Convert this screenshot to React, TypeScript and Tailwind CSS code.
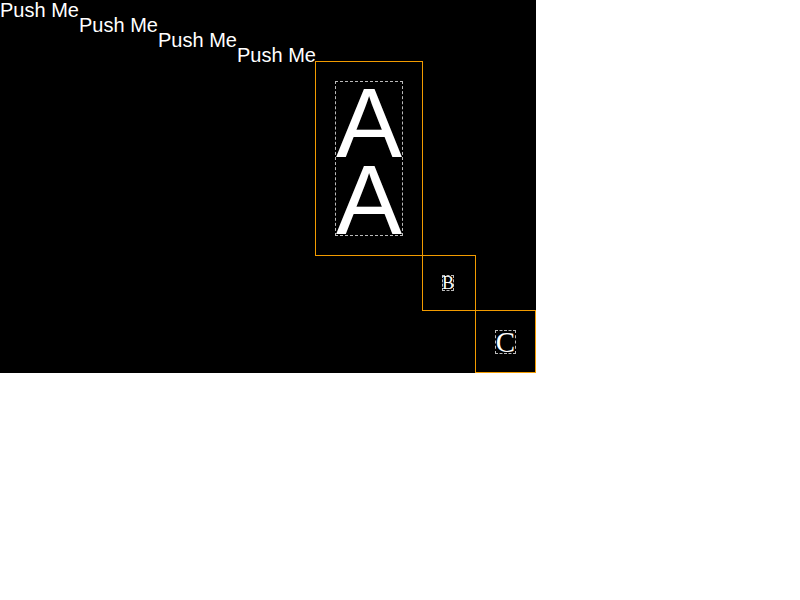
import React from "react";

const pushes = ["ml-0", "ml-[79px]", "ml-[158px]", "ml-[237px]"];

const App = () => {
  return (
    <div className="w-fit bg-black text-white flex flex-col items-start">
      {pushes.map((ml, i) => (
        <div
          key={i}
          className={`${ml} h-[15px] whitespace-nowrap text-[20px] leading-none`}
          style={{ fontFamily: '"Liberation Sans", Arial, sans-serif' }}
        >
          Push Me
        </div>
      ))}

      {/* A box */}
      <div className="ml-[315px] mt-px w-[108px] h-[195px] border border-solid border-[#f29b00] p-[19px]">
        <div className="w-[68px] h-[155px] border border-dashed border-[#bbbbbb]">
          <div
            className="pt-[2px] text-[99px] leading-[77px] text-center"
            style={{ fontFamily: '"Liberation Sans", Arial, sans-serif' }}
          >
            A A
          </div>
        </div>
      </div>

      {/* B box */}
      <div className="ml-[422px] -mt-px w-[54px] h-[56px] border border-solid border-[#f29b00] pt-[19px] pl-[19px]">
        <div
          className="w-[12px] h-[16px] border border-dashed border-[#bbbbbb] flex items-center justify-center overflow-visible text-[18px] leading-none"
          style={{ fontFamily: '"Liberation Serif", serif' }}
        >
          B
        </div>
      </div>

      {/* C box */}
      <div className="ml-[475px] -mt-px w-[61px] h-[63px] border border-solid border-[#f29b00] pt-[19px] pl-[19px]">
        <div
          className="w-[21px] h-[24px] border border-dashed border-[#bbbbbb] flex items-center justify-center overflow-visible text-[29px] leading-none"
          style={{ fontFamily: '"Liberation Serif", serif' }}
        >
          C
        </div>
      </div>
    </div>
  );
};

export default App;
